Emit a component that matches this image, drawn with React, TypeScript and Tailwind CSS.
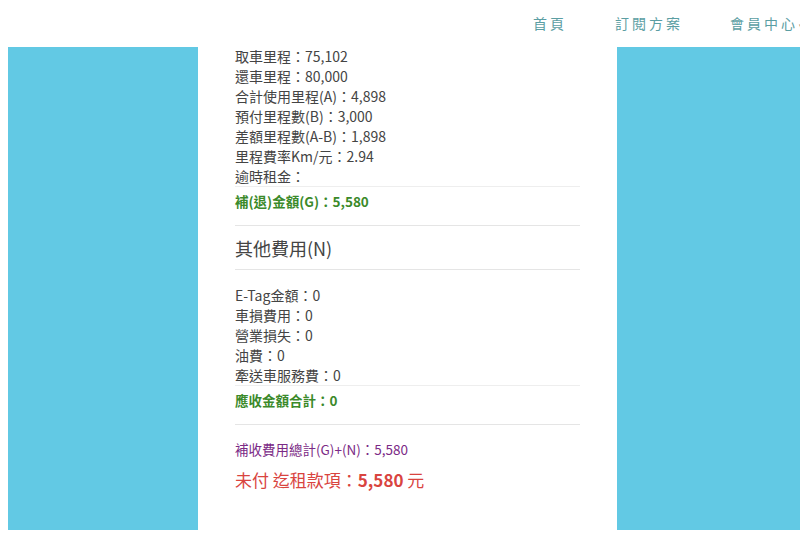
import React from "react";

const font = { fontFamily: '"Noto Sans CJK TC", "Noto Sans", sans-serif' };

export default function App() {
  const rows1 = [
    "取車里程：75,102",
    "還車里程：80,000",
    "合計使用里程(A)：4,898",
    "預付里程數(B)：3,000",
    "差額里程數(A-B)：1,898",
    "里程費率Km/元：2.94",
    "逾時租金：",
  ];
  const rows2 = ["E-Tag金額：0", "車損費用：0", "營業損失：0", "油費：0", "牽送車服務費：0"];
  return (
    <div className="w-[800px] h-[534px] overflow-hidden bg-white relative" style={font}>
      <div className="h-[47px] flex items-center pl-[533px] text-[14px] tracking-[3px] text-[#5b9ea3] whitespace-nowrap">
        <span className="w-[82px] shrink-0">首頁</span>
        <span className="w-[115px] shrink-0">訂閱方案</span>
        <span className="shrink-0">會員中心<span className="ml-[1px] text-[9px] text-[#888]">▾</span></span>
      </div>
      <div className="flex">
        <div className="ml-[8px] w-[190px] h-[483px] bg-[#62c9e4] shrink-0" />
        <div className="ml-[37px] w-[345px] shrink-0 text-[14px] text-[#444] leading-[20px]">
          <div className="-mt-[1px]">
            {rows1.map((r) => (
              <div key={r} className="h-[20px]">{r}</div>
            ))}
          </div>
          <div className="border-t border-[#eee] pt-[4px] h-[39px] text-[#3b8a2a] font-bold text-[13.5px]">
            補(退)金額(G)：5,580
          </div>
          <div className="border-t border-[#e5e5e5] h-[44px] flex items-center text-[18px] text-[#444]">
            其他費用(N)
          </div>
          <div className="border-t border-[#e5e5e5] pt-[15px]">
            {rows2.map((r) => (
              <div key={r} className="h-[20px]">{r}</div>
            ))}
          </div>
          <div className="border-t border-[#eee] pt-[4px] h-[39px] text-[#3b8a2a] font-bold text-[13.5px]">
            應收金額合計：0
          </div>
          <div className="border-t border-[#e5e5e5] pt-[14px] text-[13.5px] text-[#7b2a86]">
            補收費用總計(G)+(N)：5,580
          </div>
          <div className="mt-[9px] text-[17px] text-[#d9443f] leading-[24px]">
            未付 迄租款項：<span className="font-bold">5,580</span> 元
          </div>
        </div>
        <div className="ml-[37px] w-[200px] h-[483px] bg-[#62c9e4] shrink-0" />
      </div>
    </div>
  );
}
